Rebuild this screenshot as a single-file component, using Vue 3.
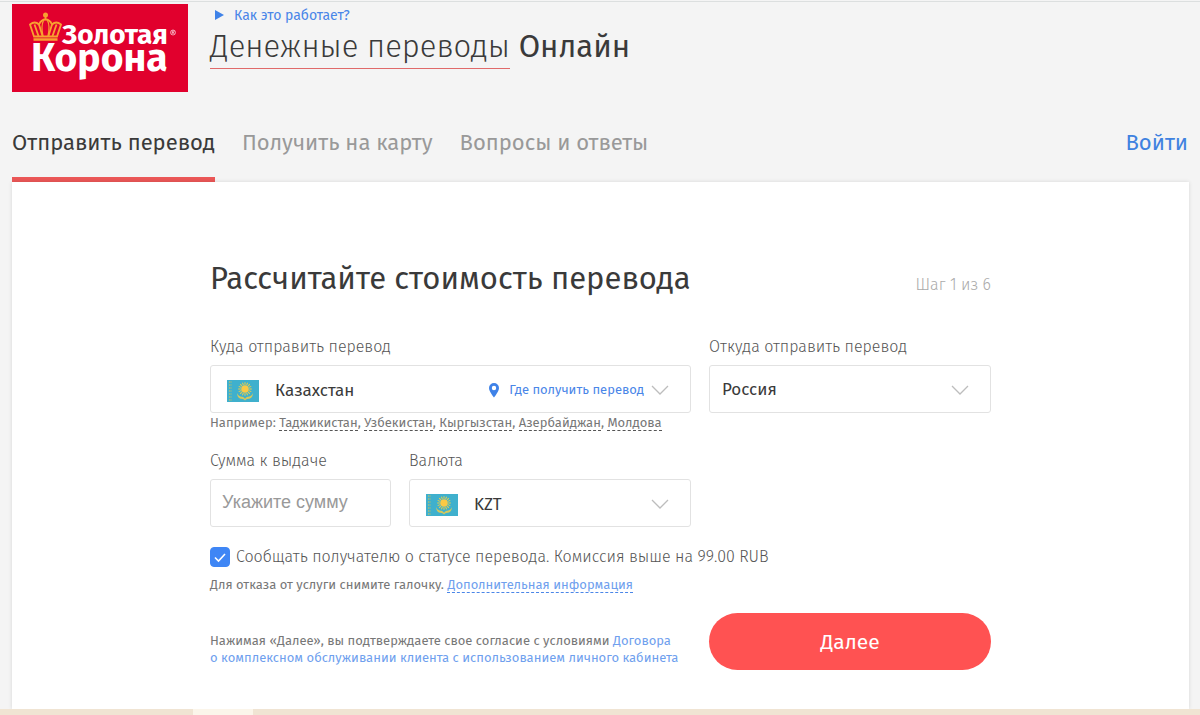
<script setup>
import { ref } from 'vue'

const destination = ref('Казахстан')
const origin = ref('Россия')
const currency = ref('KZT')
const amount = ref('')
const notify = ref(true)
const examples = ['Таджикистан', 'Узбекистан', 'Кыргызстан', 'Азербайджан', 'Молдова']
const rays = Array.from({ length: 16 }, (_, i) => i * 22.5)
</script>

<template>
  <div class="page">
    <svg class="defs" aria-hidden="true">
      <symbol id="flag-kz" viewBox="0 0 32 22">
        <rect width="32" height="22" fill="#3fb0cd" />
        <path d="M2.500 1v20M4 1v20" stroke="#a5bd7a" stroke-width="0.800" stroke-dasharray="2 1" />
        <g stroke="#e8ce4a" stroke-width="1">
          <path v-for="r in rays" :key="r" d="M18 2.200v2.600" :transform="`rotate(${r} 18 9)`" />
        </g>
        <circle cx="18" cy="9" r="3.800" fill="#fbc944" />
        <path
          d="M10 13c1 3 3 3.400 5 3.800 1.500.3 2.300.8 3 2.200.7-1.400 1.500-1.900 3-2.200 2-.4 4-.8 5-3.800-.2 4-2 5.500-4.500 5.800-1.500.2-2.500.6-3.500 1.700-1-1.100-2-1.500-3.500-1.700C12 18.500 10.200 17 10 13z"
          fill="#d8c95a"
        />
      </symbol>
      <symbol id="chevron" viewBox="0 0 18 10">
        <path d="M1 1l8 8 8-8" fill="none" stroke="#bdbdbd" stroke-width="1.300" />
      </symbol>
    </svg>

    <header class="header">
      <a class="logo" href="#" aria-label="Золотая Корона">
        <svg viewBox="0 0 176 88" width="176" height="88">
          <rect width="176" height="88" fill="#e1002d" />
          <g fill="none" stroke="#f8a130" stroke-width="1.800">
            <path d="M22 32.500L18 20.500c3-2.500 6.500-2.500 9 0 1.800-4 4-5 6.500-5s4.700 1 6.500 5c2.500-2.500 6-2.500 9 0l-4 12z" />
            <path d="M22.500 20.500L26.500 32M27 20.500L30.500 32M40 20.500L36.500 32M44.500 20.500L40.500 32M33.500 13v3" />
            <path d="M31.500 16.500c-2 4-2 9-.5 15.500M35.500 16.500c2 4 2 9 .5 15.500" stroke-width="1.200" />
            <path d="M21.500 35.500h24" stroke-width="2.500" />
          </g>
          <circle cx="33.500" cy="11" r="2.500" fill="#f8a130" />
          <g class="logo-text">
            <text x="50" y="40" font-size="28">Золотая</text>
            <text x="19" y="67" font-size="39">Корона</text>
          </g>
          <g fill="none" stroke="#fff" stroke-width="0.600">
            <circle cx="161" cy="28.500" r="2.500" />
            <path d="M160.200 30v-3h1.200a.8.800 0 0 1 0 1.600h-1.200m1.200 0l.8 1.400" />
          </g>
        </svg>
      </a>
      <div class="brand">
        <a class="how" href="#">
          <svg viewBox="0 0 9 10" width="9" height="10"><path d="M0 0l9 5-9 5z" fill="#3f82e8" /></svg>
          Как это работает?
        </a>
        <p class="service"><a href="#">Денежные переводы</a> <b>Онлайн</b></p>
      </div>
    </header>

    <nav class="tabs">
      <a class="tab active" href="#">Отправить перевод</a>
      <a class="tab" href="#">Получить на карту</a>
      <a class="tab" href="#">Вопросы и ответы</a>
      <a class="login" href="#">Войти</a>
    </nav>

    <main class="card">
      <form class="form" @submit.prevent>
        <div class="heading">
          <h1>Рассчитайте стоимость перевода</h1>
          <span class="step">Шаг 1 из 6</span>
        </div>

        <div class="row">
          <div class="wide">
            <label for="destination">Куда отправить перевод</label>
            <div class="field">
              <select id="destination" v-model="destination" class="control flagged">
                <option>Казахстан</option>
                <option v-for="c in examples" :key="c">{{ c }}</option>
              </select>
              <svg class="flag" width="32" height="22"><use href="#flag-kz" /></svg>
              <a class="where" href="#">
                <svg viewBox="0 0 12 16" width="12" height="16">
                  <path fill-rule="evenodd" d="M6 1a5 5 0 0 0-5 5c0 3.500 5 9.500 5 9.500S11 9.500 11 6a5 5 0 0 0-5-5zm0 2.800a2.200 2.200 0 1 1 0 4.400 2.200 2.200 0 0 1 0-4.400z" fill="#3f82e8" />
                </svg>
                Где получить перевод
              </a>
              <svg class="chevron" width="18" height="10"><use href="#chevron" /></svg>
            </div>
            <p class="examples">
              Например:
              <template v-for="(c, i) in examples" :key="c"><a href="#" @click.prevent="destination = c">{{ c }}</a>{{ i < examples.length - 1 ? ', ' : '' }}</template>
            </p>
          </div>
          <div class="narrow">
            <label for="origin">Откуда отправить перевод</label>
            <div class="field">
              <select id="origin" v-model="origin" class="control"><option>Россия</option></select>
              <svg class="chevron" width="18" height="10"><use href="#chevron" /></svg>
            </div>
          </div>
        </div>

        <div class="row sums">
          <div class="amount">
            <label for="amount">Сумма к выдаче</label>
            <input id="amount" v-model="amount" class="control" type="text" placeholder="Укажите сумму" />
          </div>
          <div class="narrow">
            <label for="currency">Валюта</label>
            <div class="field">
              <select id="currency" v-model="currency" class="control flagged"><option>KZT</option></select>
              <svg class="flag" width="32" height="22"><use href="#flag-kz" /></svg>
              <svg class="chevron" width="18" height="10"><use href="#chevron" /></svg>
            </div>
          </div>
        </div>

        <div class="notify">
          <span class="tick">
            <input id="notify" v-model="notify" type="checkbox" />
            <svg v-if="notify" viewBox="0 0 20 20" width="20" height="20"><path d="M5 10.500l3.500 3.500 6.500-7" fill="none" stroke="#fff" stroke-width="1.600" /></svg>
          </span>
          <label for="notify">Сообщать получателю о статусе перевода. Комиссия выше на 99.00 RUB</label>
        </div>
        <p class="note">Для отказа от услуги снимите галочку. <a href="#">Дополнительная информация</a></p>

        <div class="row submit">
          <p class="wide legal">
            Нажимая «Далее», вы подтверждаете свое согласие с условиями
            <a href="#">Договора<br />о комплексном обслуживании клиента с использованием личного кабинета</a>
          </p>
          <button class="narrow next" type="submit">Далее</button>
        </div>
      </form>
    </main>
    <footer class="strip"><span></span></footer>
  </div>
</template>

<style>
body {
  background: #f4f4f4;
}
</style>

<style scoped>
* {
  box-sizing: border-box;
}
.page {
  display: flex;
  flex-direction: column;
  min-height: 100vh;
  overflow-x: hidden;
  background: linear-gradient(#dcdfdf, #dcdfdf) 0 1px / 100% 1px no-repeat #f4f4f4;
  color: #3a3a3a;
  font-family: "Fira Sans", "Noto Sans", sans-serif;
  font-size: 16px;
}
a {
  color: #4a86e8;
  text-decoration: none;
}
p,
h1 {
  margin: 0;
}
svg {
  display: block;
}
.defs {
  position: absolute;
  width: 0;
  height: 0;
}
.header {
  display: flex;
  gap: 22px;
  padding: 4px 12px 0;
}
.logo-text {
  fill: #fff;
  font-weight: 700;
}
.how {
  display: flex;
  align-items: center;
  gap: 10px;
  height: 22px;
  padding-left: 5px;
  font-size: 14px;
}
.service {
  font-size: 31px;
  font-weight: 300;
  line-height: 42px;
}
.service a {
  display: inline-block;
  border-bottom: 1px solid #e06a6a;
  color: inherit;
}
.service b {
  font-weight: 400;
}
.tabs {
  display: flex;
  gap: 27px;
  height: 90px;
  padding: 0 12px;
  font-size: 22px;
  line-height: 28px;
}
.tab,
.login {
  padding-top: 37px;
  color: #999;
}
.tab.active {
  border-bottom: 5px solid #eb5757;
  color: #3a3a3a;
}
.login {
  margin-left: auto;
  color: #3f82e0;
}
.card {
  flex: 1;
  margin: 0 11px 0 12px;
  padding: 76px 16px 38px;
  background: #fff;
  box-shadow: 0 0 4px rgba(0, 0, 0, 0.12);
}
.form {
  max-width: 781px;
  margin: 0 auto;
}
.heading {
  display: flex;
  align-items: flex-end;
  justify-content: space-between;
  margin-bottom: 37px;
}
h1 {
  font-size: 31px;
  font-weight: 400;
  line-height: 42px;
}
.step {
  color: #aaa;
  font-weight: 300;
  line-height: 30px;
}
.row {
  display: flex;
  gap: 18px;
}
.wide {
  flex: 481;
  min-width: 0;
}
.narrow {
  flex: 282;
  min-width: 0;
}
.sums {
  max-width: 481px;
  margin-top: 20px;
}
.amount {
  flex: 181;
  min-width: 0;
}
label {
  display: block;
  color: #555;
  font-weight: 300;
  line-height: 20px;
}
.row label {
  margin-bottom: 8px;
}
.field {
  position: relative;
}
.control {
  display: block;
  width: 100%;
  height: 48px;
  padding: 0 12px;
  border: 1px solid #e2e2e2;
  border-radius: 3px;
  outline: none;
  appearance: none;
  background: #fff;
  color: #3a3a3a;
  font-family: inherit;
  font-size: 17px;
}
input.control {
  padding: 0 11px 2px;
  font-family: "Liberation Sans", Arial, sans-serif;
  font-size: 18px;
}
input.control::placeholder {
  color: #999;
}
.control.flagged {
  padding: 2px 12px 0 64px;
}
.flag {
  position: absolute;
  top: 15px;
  left: 17px;
}
.where {
  position: absolute;
  top: 15px;
  right: 47px;
  display: flex;
  align-items: center;
  gap: 9px;
  font-size: 13px;
  line-height: 20px;
}
.chevron {
  position: absolute;
  top: 20px;
  right: 22px;
  pointer-events: none;
}
.examples,
.note,
.legal {
  color: #777;
  font-size: 13px;
  font-weight: 400;
  line-height: 17px;
}
.examples {
  margin-top: 1px;
}
.examples a {
  border-bottom: 1px dashed #555;
  color: inherit;
}
.note a,
.legal a {
  color: #6f9fee;
}
.notify {
  display: flex;
  gap: 6px;
  margin-top: 20px;
}
.tick {
  position: relative;
  width: 20px;
  height: 20px;
}
.tick input {
  display: block;
  width: 20px;
  height: 20px;
  margin: 0;
  border: 1px solid #3f86f5;
  border-radius: 4px;
  appearance: none;
}
.tick input:checked {
  background: #3f86f5;
}
.tick svg {
  position: absolute;
  inset: 0;
  pointer-events: none;
}
.note {
  margin-top: 9px;
}
.note a {
  border-bottom: 1px dashed #4a86e8;
}
.submit {
  align-items: center;
  margin-top: 20px;
}
.legal {
  padding-top: 14px;
}
.next {
  height: 57px;
  padding: 0;
  border: 0;
  border-radius: 29px;
  background: #ff5252;
  color: #fff;
  font-family: inherit;
  font-size: 21px;
}
.strip {
  height: 6px;
  padding-left: 193px;
  background: #f0e4d3;
}
.strip span {
  display: block;
  width: 60px;
  height: 100%;
  background: #fbf5ea;
}
</style>
